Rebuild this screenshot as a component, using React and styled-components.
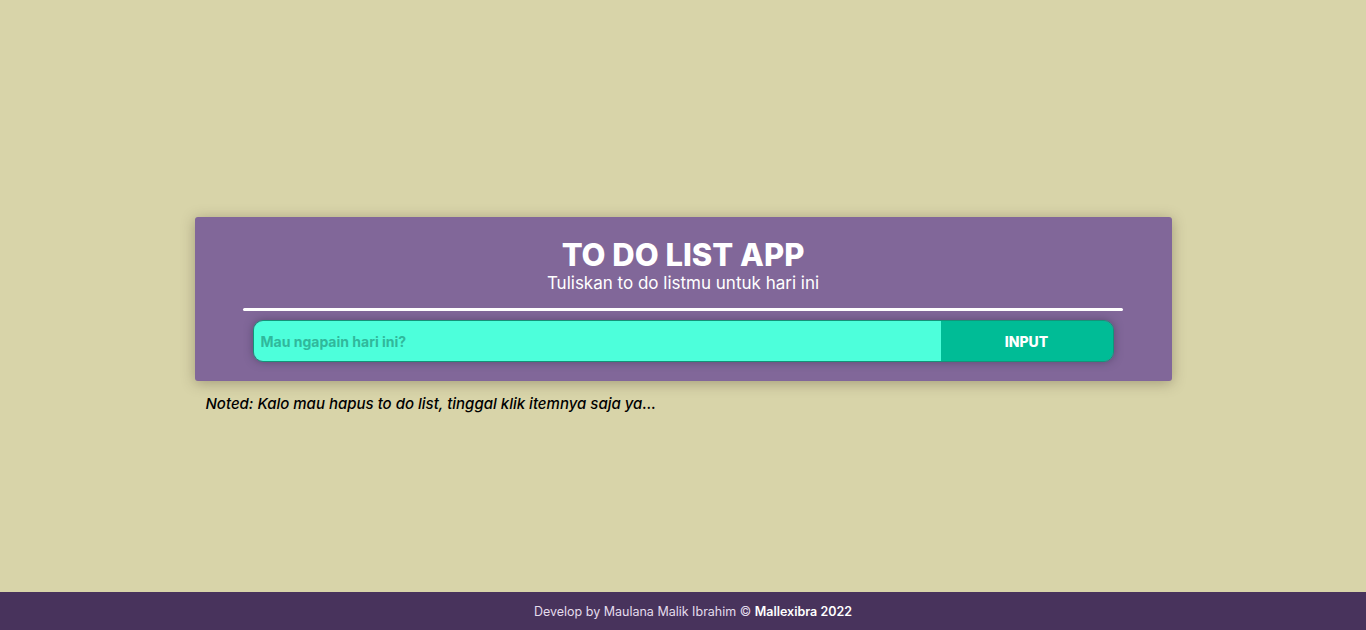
import React from 'react';
import styled, { createGlobalStyle } from 'styled-components';

/********************************************** Styles ********************************************/
const GlobalStyle = createGlobalStyle`
  * {
    box-sizing: border-box;
  }

  body {
    margin: 0;
    background-color: #d8d4a9;
    font-family: "Inter", "Open Sans", sans-serif;
  }
`;

const DivPage = styled.div`
  display: flex;
  flex-direction: column;
  min-height: 100vh;
`;

const Main = styled.main`
  flex: 1;
  display: flex;
  flex-direction: column;
  align-items: center;
  padding-top: 217px;
`;

const DivWrapper = styled.div`
  width: 977px;
`;

const DivCard = styled.div`
  display: flex;
  flex-direction: column;
  align-items: center;
  height: 164px;
  padding-top: 20px;
  background-color: #816799;
  border-radius: 3px;
  box-shadow: 0 2px 14px rgba(80, 70, 50, 0.4);
  color: white;
`;

const H1Title = styled.h1`
  margin: 0;
  font-size: 31px;
  font-weight: 800;
  line-height: 36px;
`;

const PSubtitle = styled.p`
  margin: 0;
  font-size: 17px;
  font-weight: 400;
  line-height: 20px;
`;

const HrLine = styled.div`
  width: 880px;
  height: 3px;
  margin-top: 15px;
  background-color: white;
  border-radius: 2px;
`;

const FormInput = styled.form`
  display: flex;
  width: 861px;
  height: 42px;
  margin-top: 9px;
  border-radius: 10px;
  border: 1px solid #139478;
  overflow: hidden;
  box-shadow: 0 0 8px rgba(60, 50, 80, 0.55);

  input {
    flex: 1;
    border: none;
    outline: none;
    padding: 0 7px;
    background-color: #4dffdb;
    font-family: inherit;
    font-size: 14px;
    font-weight: 700;
    color: #1a6e5e;

    &::placeholder {
      color: #30b89b;
    }
  }
`;

const ButtonInput = styled.button`
  width: 172px;
  border: none;
  background-color: #00bc96;
  color: white;
  font-family: inherit;
  font-size: 14px;
  font-weight: 800;
  cursor: pointer;
`;

const PNote = styled.p`
  margin: 13px 0 0 11px;
  font-size: 15px;
  font-style: italic;
  font-weight: 500;
  color: black;
`;

const Footer = styled.footer`
  height: 38px;
  display: flex;
  align-items: center;
  justify-content: center;
  padding-left: 20px;
  background-color: #48335c;
  color: #e4dcec;
  font-size: 12.5px;

  b {
    color: white;
    font-weight: 600;
  }
`;

/********************************************* Component ******************************************/
const App = () => {
  return (
    <DivPage>
      <GlobalStyle />
      <Main>
        <DivWrapper>
          <DivCard>
            <H1Title>TO DO LIST APP</H1Title>
            <PSubtitle>Tuliskan to do listmu untuk hari ini</PSubtitle>
            <HrLine />
            <FormInput onSubmit={e => e.preventDefault()}>
              <input type="text" placeholder="Mau ngapain hari ini?" />
              <ButtonInput type="submit">INPUT</ButtonInput>
            </FormInput>
          </DivCard>
          <PNote>Noted: Kalo mau hapus to do list, tinggal klik itemnya saja ya...</PNote>
        </DivWrapper>
      </Main>
      <Footer>
        Develop by Maulana Malik Ibrahim ©&nbsp;<b>Mallexibra 2022</b>
      </Footer>
    </DivPage>
  );
};

export default App;
